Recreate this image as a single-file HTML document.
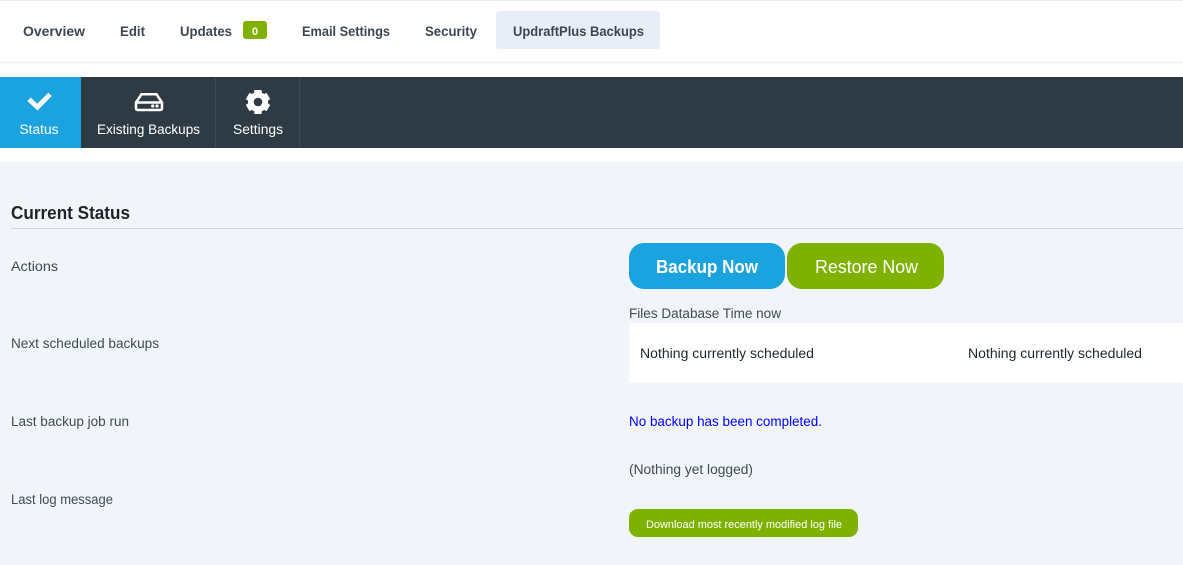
<!DOCTYPE html>
<html lang="en">
<head>
<meta charset="utf-8">
<title>UpdraftPlus Backups</title>
<style>
html,body{margin:0;padding:0;width:1183px;height:565px;overflow:hidden;background:#fff}
svg{display:block}
text{font-family:"Liberation Sans",sans-serif}
.nav{font-size:13.5px;font-weight:bold;fill:#3d4650}
.sub{font-size:13.5px;fill:#fff}
.lab{font-size:13.5px;fill:#3f4a55}
.dark{font-size:13.5px;fill:#1d2730}
</style>
</head>
<body>
<svg width="1183" height="565" viewBox="0 0 1183 565" xmlns="http://www.w3.org/2000/svg">
<rect x="0" y="0" width="1183" height="1" fill="#e9eff5"/>
<rect x="0" y="62" width="1183" height="1" fill="#e9eff5"/>
<rect x="496" y="11" width="164" height="38" rx="3" fill="#e8eef6"/>
<rect x="243" y="21" width="24" height="18" rx="3" fill="#7fb200"/>
<text class="nav" x="23" y="36" textLength="62" lengthAdjust="spacingAndGlyphs">Overview</text>
<text class="nav" x="120" y="36" textLength="25" lengthAdjust="spacingAndGlyphs">Edit</text>
<text class="nav" x="180" y="36" textLength="52" lengthAdjust="spacingAndGlyphs">Updates</text>
<text x="255" y="35" text-anchor="middle" font-size="11" font-weight="bold" fill="#fff">0</text>
<text class="nav" x="302" y="36" textLength="88" lengthAdjust="spacingAndGlyphs">Email Settings</text>
<text class="nav" x="425" y="36" textLength="52" lengthAdjust="spacingAndGlyphs">Security</text>
<text class="nav" x="513" y="36" textLength="131" lengthAdjust="spacingAndGlyphs">UpdraftPlus Backups</text>

<rect x="0" y="77" width="1183" height="71" fill="#2e3b45"/>
<rect x="0" y="77" width="81" height="71" fill="#1ba3e0"/>
<rect x="215" y="77" width="1" height="71" fill="#3c4a55"/>
<rect x="299" y="77" width="1" height="71" fill="#3c4a55"/>
<path d="M30.7 97.5 L37.3 103.7 L48.3 92.7 L51.7 96 L37.5 110.5 L27.3 101 Z" fill="#fff"/>
<path d="M136 102.5 L141.5 94.2 H156.5 L162 102.5 V108 Q162 110 160 110 H138 Q136 110 136 108 Z M136 102.5 H162" fill="none" stroke="#fff" stroke-width="2.5"/>
<circle cx="152.7" cy="106" r="1.6" fill="#fff"/><circle cx="157" cy="106" r="1.6" fill="#fff"/>
<g fill="#fff">
<circle cx="258" cy="102" r="10"/>
<rect x="254.2" y="90" width="7.6" height="24" rx="1"/>
<rect x="254.2" y="90" width="7.6" height="24" rx="1" transform="rotate(60 258 102)"/>
<rect x="254.2" y="90" width="7.6" height="24" rx="1" transform="rotate(120 258 102)"/>
</g>
<circle cx="258" cy="102" r="4.3" fill="#2e3b45"/>
<text class="sub" x="19.5" y="134" textLength="39" lengthAdjust="spacingAndGlyphs">Status</text>
<text class="sub" x="97" y="134" textLength="103" lengthAdjust="spacingAndGlyphs">Existing Backups</text>
<text class="sub" x="233" y="134" textLength="50" lengthAdjust="spacingAndGlyphs">Settings</text>

<rect x="0" y="162" width="1183" height="403" fill="#f1f5f9"/>
<text x="11" y="219" font-size="18" font-weight="bold" fill="#1d2327" textLength="119" lengthAdjust="spacingAndGlyphs">Current Status</text>
<rect x="11" y="228" width="1172" height="1" fill="#d0d4d8"/>

<text class="lab" x="11" y="271" textLength="47" lengthAdjust="spacingAndGlyphs">Actions</text>
<rect x="629" y="243" width="156" height="46" rx="15" fill="#1ba3e0"/>
<rect x="787" y="243" width="157" height="46" rx="15" fill="#7fb200"/>
<text x="656" y="273" font-size="18" font-weight="bold" fill="#fff" textLength="102" lengthAdjust="spacingAndGlyphs">Backup Now</text>
<text x="815" y="273" font-size="18" fill="#fff" textLength="103" lengthAdjust="spacingAndGlyphs">Restore Now</text>

<text class="lab" x="629" y="318" textLength="152" lengthAdjust="spacingAndGlyphs">Files Database Time now</text>
<path d="M632 323 H1183 V383 H632 Q629 383 629 380 V326 Q629 323 632 323 Z" fill="#fff"/>
<text class="dark" x="640" y="358" textLength="174" lengthAdjust="spacingAndGlyphs">Nothing currently scheduled</text>
<text class="dark" x="968" y="358" textLength="174" lengthAdjust="spacingAndGlyphs">Nothing currently scheduled</text>
<text class="lab" x="11" y="348" textLength="148" lengthAdjust="spacingAndGlyphs">Next scheduled backups</text>

<text class="lab" x="11" y="426" textLength="118" lengthAdjust="spacingAndGlyphs">Last backup job run</text>
<text x="629" y="426" font-size="13.5" fill="#0000ff" textLength="193" lengthAdjust="spacingAndGlyphs">No backup has been completed.</text>

<text class="lab" x="629" y="474" textLength="124" lengthAdjust="spacingAndGlyphs">(Nothing yet logged)</text>
<text class="lab" x="11" y="504" textLength="102" lengthAdjust="spacingAndGlyphs">Last log message</text>
<rect x="629" y="509" width="229" height="28" rx="9" fill="#7fb200"/>
<text x="646" y="528" font-size="11" fill="#fff" textLength="196" lengthAdjust="spacingAndGlyphs">Download most recently modified log file</text>
</svg>
</body>
</html>
